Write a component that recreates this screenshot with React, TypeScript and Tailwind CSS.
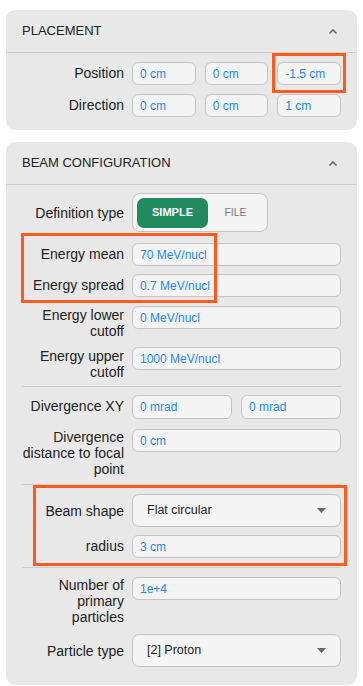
import type { ReactNode } from 'react';

const inputBase =
  'flex h-[23px] min-w-0 flex-1 items-center rounded-[6px] border border-[#c4c4c4] bg-[#f4f4f4] pl-[7px] text-[12px] text-[#1e88f5]';
const selectBase =
  'flex h-[33px] flex-1 items-center justify-between rounded-[7px] border border-[#c4c4c4] bg-[#f4f4f4] pl-[14px] pr-[14px] text-[12.5px] text-[#222]';
const labelBase = 'w-[102px] shrink-0 text-right text-[14px] leading-4 text-[#222]';

function Chevron() {
  return (
    <svg width="10" height="7" viewBox="0 0 10 7" className="mr-[3px]">
      <polyline points="1.5,5.5 5,2 8.5,5.5" fill="none" stroke="#6b6b6b" strokeWidth="1.6" />
    </svg>
  );
}

function Caret() {
  return (
    <svg width="9" height="5" viewBox="0 0 9 5">
      <polygon points="0,0 9,0 4.5,5" fill="#666" />
    </svg>
  );
}

function Field({ value }: { value: string }) {
  return <div className={inputBase}>{value}</div>;
}

function Row({ label, children, className = '', pt = 'pt-[3px]' }: { label: ReactNode; children: ReactNode; className?: string; pt?: string }) {
  return (
    <div className={`flex items-start gap-2 ${className}`}>
      <div className={`${labelBase} ${pt}`}>{label}</div>
      <div className="flex flex-1 gap-[9px]">{children}</div>
    </div>
  );
}

function Header({ title, h }: { title: string; h: string }) {
  return (
    <div className={`flex ${h} items-center justify-between border-b border-[#cdcdcd] px-4 text-[13px] text-[#222]`}>
      <span>{title}</span>
      <Chevron />
    </div>
  );
}

const Divider = ({ className }: { className: string }) => <div className={`h-px bg-[#cdcdcd] ${className}`} />;

export default function App() {
  return (
    <div className="relative min-h-screen bg-white px-[6px] pt-[10px] font-['Liberation_Sans',Arial,sans-serif]">
      <section className="rounded-[9px] bg-[#e8e8e8]">
        <Header title="PLACEMENT" h="h-[43px]" />
        <div className="px-4 pt-[9px] pb-[13px]">
          <Row label="Position">
            <Field value="0 cm" />
            <Field value="0 cm" />
            <Field value="-1.5 cm" />
          </Row>
          <Row label="Direction" className="mt-[9px]">
            <Field value="0 cm" />
            <Field value="0 cm" />
            <Field value="1 cm" />
          </Row>
        </div>
      </section>

      <section className="mt-[12px] rounded-[9px] bg-[#e8e8e8]">
        <Header title="BEAM CONFIGURATION" h="h-[43px]" />
        <div className="px-4 pt-[8px] pb-[18px]">
          <div className="flex items-center gap-2">
            <div className={labelBase}>Definition type</div>
            <div className="flex h-[39px] w-[136px] items-center rounded-[8px] border border-[#c4c4c4] bg-[#f4f4f4] p-[4px]">
              <div className="flex h-[30px] w-[71px] items-center justify-center rounded-[7px] bg-[#218a5f] text-[11px] font-bold text-white">
                SIMPLE
              </div>
              <div className="flex flex-1 items-center justify-center text-[10.5px] text-[#777]">FILE</div>
            </div>
          </div>
          <Row label="Energy mean" className="mt-[11px]">
            <Field value="70 MeV/nucl" />
          </Row>
          <Row label="Energy spread" className="mt-[8px]">
            <Field value="0.7 MeV/nucl" />
          </Row>
          <Row label={<>Energy lower<br />cutoff</>} className="mt-[9px]" pt="pt-[1px]">
            <Field value="0 MeV/nucl" />
          </Row>
          <Row label={<>Energy upper<br />cutoff</>} className="mt-[8px]" pt="pt-[1px]">
            <Field value="1000 MeV/nucl" />
          </Row>
          <Divider className="mt-[6px]" />
          <Row label="Divergence XY" className="mt-[8px]">
            <div className={`${inputBase} h-[24px]`}>0 mrad</div>
            <div className={`${inputBase} h-[24px]`}>0 mrad</div>
          </Row>
          <Row label={<>Divergence<br />distance to focal<br />point</>} className="mt-[10px]" pt="pt-0">
            <Field value="0 cm" />
          </Row>
          <Divider className="mt-[7px]" />
          <div className="mt-[9px] flex items-center gap-2">
            <div className={labelBase}>Beam shape</div>
            <div className={selectBase}>
              <span>Flat circular</span>
              <Caret />
            </div>
          </div>
          <Row label="radius" className="mt-[8px]">
            <Field value="3 cm" />
          </Row>
          <Divider className="mt-[9px]" />
          <Row label={<>Number of<br />primary<br />particles</>} className="mt-[9px]" pt="pt-0">
            <Field value="1e+4" />
          </Row>
          <div className="mt-[9px] flex items-center gap-2">
            <div className={labelBase}>Particle type</div>
            <div className={selectBase}>
              <span>[2] Proton</span>
              <Caret />
            </div>
          </div>
        </div>
      </section>

      <div className="pointer-events-none absolute left-[272px] top-[53px] h-[40px] w-[74px] border-[3px] border-[#ff5a1f]" />
      <div className="pointer-events-none absolute left-[21px] top-[233px] h-[70px] w-[196px] border-[3px] border-[#ff5a1f]" />
      <div className="pointer-events-none absolute left-[33px] top-[485px] h-[81px] w-[314px] border-[3px] border-[#ff5a1f]" />
    </div>
  );
}
